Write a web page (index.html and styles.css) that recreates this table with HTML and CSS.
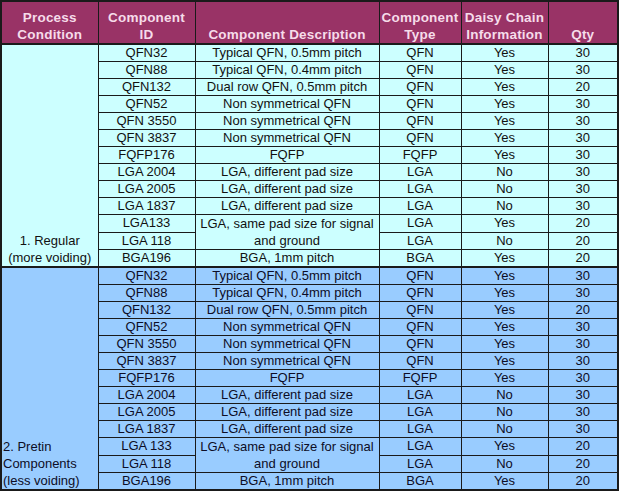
FILE: index.html
```html
<!DOCTYPE html>
<html>
<head>
<meta charset="utf-8">
<link rel="stylesheet" href="styles.css">
</head>
<body>
<table class="grid">
  <colgroup>
    <col class="c1"><col class="c2"><col class="c3"><col class="c4"><col class="c5"><col class="c6">
  </colgroup>
  <thead>
    <tr class="head">
      <th>Process<br>Condition</th>
      <th>Component<br>ID</th>
      <th>Component Description</th>
      <th>Component<br>Type</th>
      <th>Daisy Chain<br>Information</th>
      <th>Qty</th>
    </tr>
  </thead>
  <tbody class="s1">
    <tr><td class="proc center" rowspan="13">1. Regular<br>(more voiding)</td><td>QFN32</td><td>Typical QFN, 0.5mm pitch</td><td>QFN</td><td>Yes</td><td>30</td></tr>
    <tr><td>QFN88</td><td>Typical QFN, 0.4mm pitch</td><td>QFN</td><td>Yes</td><td>30</td></tr>
    <tr><td>QFN132</td><td>Dual row QFN, 0.5mm pitch</td><td>QFN</td><td>Yes</td><td>20</td></tr>
    <tr><td>QFN52</td><td>Non symmetrical QFN</td><td>QFN</td><td>Yes</td><td>30</td></tr>
    <tr><td>QFN 3550</td><td>Non symmetrical QFN</td><td>QFN</td><td>Yes</td><td>30</td></tr>
    <tr><td>QFN 3837</td><td>Non symmetrical QFN</td><td>QFN</td><td>Yes</td><td>30</td></tr>
    <tr><td>FQFP176</td><td>FQFP</td><td>FQFP</td><td>Yes</td><td>30</td></tr>
    <tr><td>LGA 2004</td><td>LGA, different pad size</td><td>LGA</td><td>No</td><td>30</td></tr>
    <tr><td>LGA 2005</td><td>LGA, different pad size</td><td>LGA</td><td>No</td><td>30</td></tr>
    <tr><td>LGA 1837</td><td>LGA, different pad size</td><td>LGA</td><td>No</td><td>30</td></tr>
    <tr><td>LGA133</td><td class="wrap" rowspan="2">LGA, same pad size for signal<br>and ground</td><td>LGA</td><td>Yes</td><td>20</td></tr>
    <tr><td>LGA 118</td><td>LGA</td><td>No</td><td>20</td></tr>
    <tr><td>BGA196</td><td>BGA, 1mm pitch</td><td>BGA</td><td>Yes</td><td>20</td></tr>
  </tbody>
  <tbody class="s2">
    <tr><td class="proc left" rowspan="13">2. Pretin<br>Components<br>(less voiding)</td><td>QFN32</td><td>Typical QFN, 0.5mm pitch</td><td>QFN</td><td>Yes</td><td>30</td></tr>
    <tr><td>QFN88</td><td>Typical QFN, 0.4mm pitch</td><td>QFN</td><td>Yes</td><td>30</td></tr>
    <tr><td>QFN132</td><td>Dual row QFN, 0.5mm pitch</td><td>QFN</td><td>Yes</td><td>20</td></tr>
    <tr><td>QFN52</td><td>Non symmetrical QFN</td><td>QFN</td><td>Yes</td><td>30</td></tr>
    <tr><td>QFN 3550</td><td>Non symmetrical QFN</td><td>QFN</td><td>Yes</td><td>30</td></tr>
    <tr><td>QFN 3837</td><td>Non symmetrical QFN</td><td>QFN</td><td>Yes</td><td>30</td></tr>
    <tr><td>FQFP176</td><td>FQFP</td><td>FQFP</td><td>Yes</td><td>30</td></tr>
    <tr><td>LGA 2004</td><td>LGA, different pad size</td><td>LGA</td><td>No</td><td>30</td></tr>
    <tr><td>LGA 2005</td><td>LGA, different pad size</td><td>LGA</td><td>No</td><td>30</td></tr>
    <tr><td>LGA 1837</td><td>LGA, different pad size</td><td>LGA</td><td>No</td><td>30</td></tr>
    <tr><td>LGA 133</td><td class="wrap" rowspan="2">LGA, same pad size for signal<br>and ground</td><td>LGA</td><td>Yes</td><td>20</td></tr>
    <tr><td>LGA 118</td><td>LGA</td><td>No</td><td>20</td></tr>
    <tr><td>BGA196</td><td>BGA, 1mm pitch</td><td>BGA</td><td>Yes</td><td>20</td></tr>
  </tbody>
</table>
</body>
</html>
```
FILE: styles.css
```css
html, body {
  margin: 0;
  padding: 0;
  background: #ffffff;
}
.grid {
  border-collapse: collapse;
  table-layout: fixed;
  width: 617px;
  font-family: "Liberation Sans", Arial, sans-serif;
  font-size: 13px;
  color: #111111;
  border: 2px solid #1a1a1a;
}
.c1 { width: 97px; }
.c2 { width: 97px; }
.c3 { width: 184px; }
.c4 { width: 82px; }
.c5 { width: 87px; }
.c6 { width: 70px; }
.grid th, .grid td {
  border: 1px solid #1a1a1a;
  padding: 0 2px;
  text-align: center;
  white-space: nowrap;
  overflow: hidden;
}
.head th {
  height: 41px;
  background: #993366;
  color: #f6dcea;
  font-weight: bold;
  font-size: 13.5px;
  letter-spacing: 0.2px;
  line-height: 17px;
  vertical-align: bottom;
  padding: 0 1px 0;
}
.grid thead {
  border-bottom: 2px solid #1a1a1a;
}
.grid tbody td {
  height: 16px;
  line-height: 16px;
  vertical-align: middle;
}
.s1 td { background: #ccffff; }
.s2 td { background: #99ccff; color: #0d0d26; }
.s2 { border-top: 2px solid #1a1a1a; }
.proc {
  vertical-align: bottom !important;
  line-height: 17px !important;
  padding-bottom: 0;
}
.proc.center { text-align: center; }
.proc.left { text-align: left; padding-left: 1px; }
.wrap {
  line-height: 17px !important;
}
```
